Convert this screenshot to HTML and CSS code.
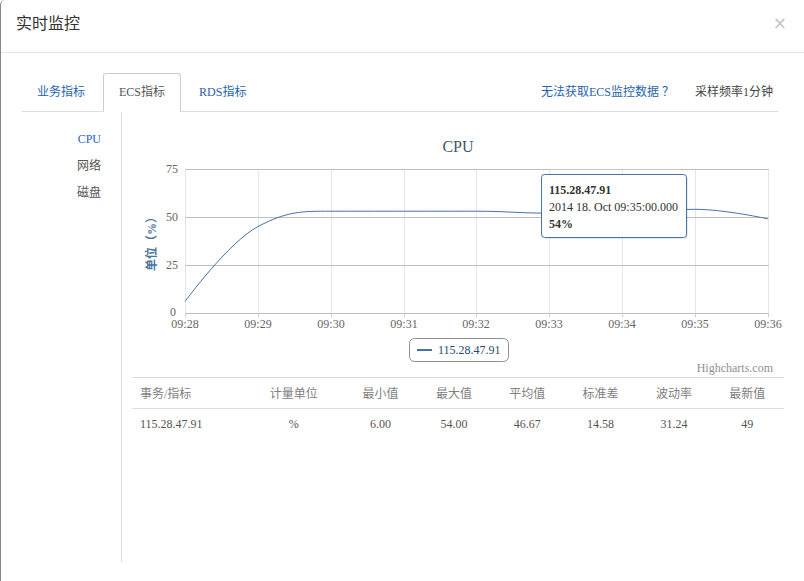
FILE: index.html
```html
<!DOCTYPE html>
<html lang="zh-CN">
<head>
  <meta charset="UTF-8" />
  <title>实时监控</title>
  <link rel="stylesheet" href="styles.css">
</head>
<body>
  <div class="modal">
    <!-- Header -->
    <div class="modal-header">
      <h4 class="modal-title">实时监控</h4>
      <span class="close">×</span>
    </div>

    <div class="modal-body">
      <!-- Tabs -->
      <div class="tab-bar">
        <a class="tab">业务指标</a>
        <a class="tab active">ECS指标</a>
        <a class="tab">RDS指标</a>
        <div class="tab-extra">
          <a class="help-link">无法获取ECS监控数据 ？</a>
          <span class="rate">采样频率1分钟</span>
        </div>
      </div>

      <div class="content">
        <ul class="side-nav">
          <li class="active">CPU</li>
          <li>网络</li>
          <li>磁盘</li>
        </ul>

        <div class="main">
          <!-- Chart -->
          <svg class="chart" width="652" height="265" viewBox="0 0 652 265">
            <text class="chart-title" x="326" y="40" text-anchor="middle">CPU</text>

            <g class="grid-v">
              <line x1="53.5" y1="57" x2="53.5" y2="201" />
              <line x1="126.5" y1="57" x2="126.5" y2="201" />
              <line x1="199.5" y1="57" x2="199.5" y2="201" />
              <line x1="272.5" y1="57" x2="272.5" y2="201" />
              <line x1="344.5" y1="57" x2="344.5" y2="201" />
              <line x1="417.5" y1="57" x2="417.5" y2="201" />
              <line x1="490.5" y1="57" x2="490.5" y2="201" />
              <line x1="563.5" y1="57" x2="563.5" y2="201" />
              <line x1="636.5" y1="57" x2="636.5" y2="201" />
            </g>
            <g class="grid-h">
              <line x1="53" y1="57.5" x2="637" y2="57.5" />
              <line x1="53" y1="105.5" x2="637" y2="105.5" />
              <line x1="53" y1="153.5" x2="637" y2="153.5" />
            </g>
            <line class="x-axis" x1="53" y1="201.5" x2="637" y2="201.5" />
            <g class="ticks">
              <line x1="53.5" y1="201" x2="53.5" y2="205" />
              <line x1="126.5" y1="201" x2="126.5" y2="205" />
              <line x1="199.5" y1="201" x2="199.5" y2="205" />
              <line x1="272.5" y1="201" x2="272.5" y2="205" />
              <line x1="344.5" y1="201" x2="344.5" y2="205" />
              <line x1="417.5" y1="201" x2="417.5" y2="205" />
              <line x1="490.5" y1="201" x2="490.5" y2="205" />
              <line x1="563.5" y1="201" x2="563.5" y2="205" />
              <line x1="636.5" y1="201" x2="636.5" y2="205" />
            </g>

            <g class="y-labels" text-anchor="end">
              <text x="46" y="61">75</text>
              <text x="46" y="109">50</text>
              <text x="46" y="157">25</text>
              <text x="44" y="204">0</text>
            </g>
            <g class="x-labels" text-anchor="middle">
              <text x="53" y="216">09:28</text>
              <text x="126" y="216">09:29</text>
              <text x="199" y="216">09:30</text>
              <text x="272" y="216">09:31</text>
              <text x="344" y="216">09:32</text>
              <text x="417" y="216">09:33</text>
              <text x="490" y="216">09:34</text>
              <text x="563" y="216">09:35</text>
              <text x="636" y="216">09:36</text>
            </g>
            <text class="y-title" x="0" y="0" text-anchor="middle" transform="translate(24 129) rotate(-90)">单位（%）</text>

            <path class="series" d="M 53 189.5 C 53 189.5 96.7 130 125.9 114.6 C 155 99.2 169.6 99.2 198.8 99.2 C 227.9 99.2 242.5 99.2 271.6 99.2 C 300.7 99.2 315.3 99.2 344.5 99.2 C 373.7 99.2 388.2 101.2 417.4 101.2 C 446.5 101.2 461.1 101.2 490.3 101.2 C 519.4 101.2 534 97.3 563.1 97.3 C 592.3 97.3 636 106.9 636 106.9" />

            <!-- Tooltip -->
            <g class="tooltip">
              <rect class="tooltip-shadow" x="411" y="64" width="145" height="63" rx="3" />
              <rect class="tooltip-box" x="409.5" y="62.5" width="145" height="63" rx="3" />
              <text x="417" y="82" class="bold">115.28.47.91</text>
              <text x="417" y="99">2014 18. Oct 09:35:00.000</text>
              <text x="417" y="116" class="bold">54%</text>
            </g>

            <!-- Legend -->
            <rect class="legend-box" x="277.5" y="226.5" width="99" height="23" rx="5" />
            <line class="legend-line" x1="285" y1="238" x2="300" y2="238" />
            <text class="legend-text" x="306" y="242">115.28.47.91</text>

            <text class="credits" x="641" y="260" text-anchor="end">Highcharts.com</text>
          </svg>

          <!-- Stats table -->
          <table class="stats">
            <thead>
              <tr>
                <th class="first">事务/指标</th>
                <th class="unit">计量单位</th>
                <th>最小值</th>
                <th>最大值</th>
                <th>平均值</th>
                <th>标准差</th>
                <th>波动率</th>
                <th>最新值</th>
              </tr>
            </thead>
            <tbody>
              <tr>
                <td class="first">115.28.47.91</td>
                <td>%</td>
                <td>6.00</td>
                <td>54.00</td>
                <td>46.67</td>
                <td>14.58</td>
                <td>31.24</td>
                <td>49</td>
              </tr>
            </tbody>
          </table>
        </div>
      </div>
    </div>
  </div>
</body>
</html>
```

FILE: styles.css
```css
/* Reset & Base */
* {
  margin: 0;
  padding: 0;
  box-sizing: border-box;
}

body {
  font-family: "Liberation Serif", "Noto Sans CJK SC", serif;
  font-size: 12px;
  color: #333;
  background: #fff;
}

a {
  text-decoration: none;
  cursor: pointer;
}

/* Modal */
.modal {
  min-height: 100vh;
  border-left: 1px solid #888;
  border-top-left-radius: 5px;
  background: #fff;
}

.modal-header {
  height: 53px;
  padding: 13px 15px 0 15px;
  border-bottom: 1px solid #e5e5e5;
  display: flex;
  justify-content: space-between;
}

.modal-title {
  font-size: 16px;
  font-weight: normal;
  line-height: 22px;
  color: #333;
}

.close {
  font-family: "DejaVu Sans", sans-serif;
  font-size: 17px;
  line-height: 20px;
  color: #c4c4c4;
  margin-right: 2px;
}

.modal-body {
  padding: 20px 20px 20px 21px;
}

/* Tabs */
.tab-bar {
  display: flex;
  align-items: flex-end;
  border-bottom: 1px solid #ddd;
  margin-right: 6px;
  height: 39px;
}

.tab {
  display: block;
  padding: 0 15px;
  margin-right: 2px;
  height: 38px;
  line-height: 36px;
  color: #1f63ad;
  border: 1px solid transparent;
  border-radius: 3px 3px 0 0;
}

.tab:first-child {
  padding-left: 14px;
}

.tab.active {
  color: #555;
  background: #fff;
  border-color: #ccc;
  border-bottom-color: #fff;
  height: 39px;
  margin-bottom: -1px;
}

.tab-extra {
  margin-left: auto;
  align-self: center;
  display: flex;
  gap: 21px;
  padding-right: 5px;
  line-height: 18px;
}

.help-link {
  color: #1f63ad;
}

.rate {
  color: #444;
}

/* Content */
.content {
  display: flex;
}

.side-nav {
  list-style: none;
  width: 100px;
  min-height: 450px;
  border-right: 1px solid #ddd;
  padding-top: 14px;
  text-align: right;
}

.side-nav li {
  line-height: 27px;
  padding-right: 20px;
  color: #555;
}

.side-nav li.active {
  color: #1f63ad;
}

.main {
  flex: 1;
  padding-left: 10px;
}

/* Chart */
.chart {
  display: block;
  font-family: "Liberation Serif", "Noto Sans CJK SC", serif;
}

.chart-title {
  font-size: 16px;
  fill: #3e576f;
}

.grid-v line {
  stroke: #e6e6e6;
  stroke-width: 1;
}

.grid-h line {
  stroke: #c0c0c0;
  stroke-width: 1;
}

.x-axis {
  stroke: #c0c0c0;
}

.ticks line {
  stroke: #c0d0e0;
}

.y-labels text,
.x-labels text {
  font-size: 12px;
  fill: #666;
}

.y-title {
  font-size: 12px;
  font-weight: bold;
  fill: #4d759e;
}

.series {
  fill: none;
  stroke: #4572a7;
  stroke-width: 1;
}

.tooltip-shadow {
  fill: rgba(0, 0, 0, 0.08);
}

.tooltip-box {
  fill: #fff;
  stroke: #4572a7;
  stroke-width: 1;
}

.tooltip text {
  font-size: 12px;
  fill: #333;
}

.tooltip text.bold {
  font-weight: bold;
}

.legend-box {
  fill: #fff;
  stroke: #909090;
}

.legend-line {
  stroke: #4572a7;
  stroke-width: 2;
}

.legend-text {
  font-size: 12px;
  fill: #274b6d;
}

.credits {
  font-size: 12px;
  fill: #909090;
}

/* Stats Table */
.stats {
  width: 100%;
  border-collapse: collapse;
  color: #555;
}

.stats th,
.stats td {
  text-align: center;
  font-weight: normal;
  width: 73px;
  padding: 0 8px;
}

.stats th {
  height: 31px;
  color: #808080;
  border-top: 1px solid #ddd;
  border-bottom: 1px solid #ddd;
}

.stats td {
  height: 32px;
}

.stats .first {
  text-align: left;
  width: 111px;
}

.stats .unit {
  width: 100px;
}
```
